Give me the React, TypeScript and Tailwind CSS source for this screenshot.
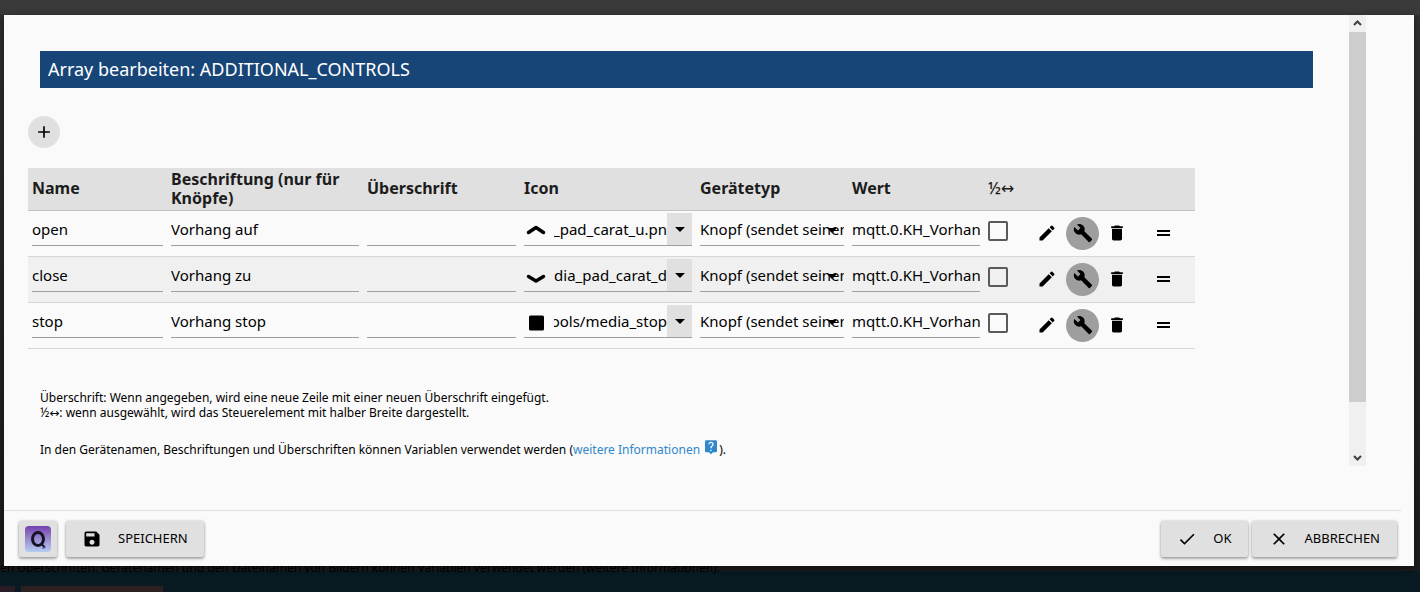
import React, { useState } from "react";
import {
  MdAdd,
  MdArrowDropDown,
  MdBuild,
  MdCheck,
  MdClose,
  MdDelete,
  MdEdit,
  MdLiveHelp,
  MdSave,
} from "react-icons/md";

interface Control {
  name: string;
  caption: string;
  heading: string;
  icon: "up" | "down" | "stop";
  iconPath: string;
  value: string;
  half: boolean;
}

const initialControls: Control[] = [
  { name: "open", caption: "Vorhang auf", heading: "", icon: "up", iconPath: "_pad_carat_u.pn", value: "mqtt.0.KH_Vorhang", half: false },
  { name: "close", caption: "Vorhang zu", heading: "", icon: "down", iconPath: "dia_pad_carat_d", value: "mqtt.0.KH_Vorhang", half: false },
  { name: "stop", caption: "Vorhang stop", heading: "", icon: "stop", iconPath: "ools/media_stop", value: "mqtt.0.KH_Vorhang", half: false },
];

const field = "block h-8 w-full border-b border-[#9e9e9e] bg-transparent text-[15px] text-black outline-none";
const raised =
  "flex h-9 items-center rounded-xs bg-[#e0e0e0] text-[13px] text-black shadow-[0_2px_3px_rgba(0,0,0,0.3),0_0_3px_rgba(0,0,0,0.2)]";

const MediaIcon = ({ type }: { type: Control["icon"] }) => (
  <svg viewBox="0 0 24 24" className="size-6 shrink-0" aria-hidden="true">
    {type === "up" && <path d="M4.500 15.500 12 10.500l7.500 5" fill="none" stroke="#000" strokeWidth="3.500" strokeLinecap="round" strokeLinejoin="round" />}
    {type === "down" && <path d="M4.500 13.500 12 18l7.500-4.500" fill="none" stroke="#000" strokeWidth="3.500" strokeLinecap="round" strokeLinejoin="round" />}
    {type === "stop" && <rect x="5" y="6.500" width="15" height="15" rx="1.500" fill="#000" />}
  </svg>
);

const DragIcon = () => (
  <svg viewBox="0 0 20 20" className="size-5" aria-hidden="true">
    <path d="M3 7h13v2H3zM3 11h13v2H3z" />
  </svg>
);

const Logo = () => (
  <svg viewBox="0 0 26 26" className="size-[26px]" aria-hidden="true">
    <defs>
      <linearGradient id="logoBg" x1="0" y1="0" x2="0" y2="1">
        <stop offset="0" stopColor="#7440ae" />
        <stop offset="0.500" stopColor="#9a8ad0" />
        <stop offset="1" stopColor="#b4cdf2" />
      </linearGradient>
    </defs>
    <rect width="26" height="26" rx="4" fill="url(#logoBg)" />
    <ellipse cx="13" cy="13" rx="5.500" ry="6.500" fill="none" stroke="#161424" strokeWidth="3" />
    <path d="M16 17.500l3.500 3.500" stroke="#161424" strokeWidth="2" />
    <path d="M17 22h3v-2" fill="none" stroke="#5a3a9a" strokeWidth="1" />
  </svg>
);

const HalfWidth = () => (
  <>
    ½<span className="font-['DejaVu_Sans',sans-serif] leading-none">↔</span>
  </>
);

const ControlRow = ({ control, onChange }: { control: Control; onChange: (c: Control) => void }) => (
  <tr className="h-[46px] border-b border-[#d6d6d6] align-top even:bg-[#f0f0f0]">
    <td className="px-1 pt-[3px]">
      <input aria-label="Name" className={field} value={control.name} onChange={(e) => onChange({ ...control, name: e.target.value })} />
    </td>
    <td className="px-1 pt-[3px]">
      <input aria-label="Beschriftung" className={field} value={control.caption} onChange={(e) => onChange({ ...control, caption: e.target.value })} />
    </td>
    <td className="px-1 pt-[3px]">
      <input aria-label="Überschrift" className={field} value={control.heading} onChange={(e) => onChange({ ...control, heading: e.target.value })} />
    </td>
    <td className="px-1 pt-[3px]">
      <div className="flex h-8 items-center border-b border-[#9e9e9e]">
        <MediaIcon type={control.icon} />
        <div className="ml-1.5 flex min-w-0 flex-1 justify-end overflow-hidden">
          <input
            aria-label="Icon"
            className="w-[140px] shrink-0 bg-transparent text-right text-[15px] text-black outline-none"
            value={control.iconPath}
            onChange={(e) => onChange({ ...control, iconPath: e.target.value })}
          />
        </div>
        <button aria-label="Icon wählen" className="flex h-8 w-[25px] shrink-0 items-center justify-center bg-[#e0e0e0]">
          <MdArrowDropDown className="size-6 shrink-0" />
        </button>
      </div>
    </td>
    <td className="px-1 pt-[3px]">
      <div className="relative">
        <select aria-label="Gerätetyp" className={field + " appearance-none"}>
          <option>Knopf (sendet seinen Wert)</option>
        </select>
        <MdArrowDropDown className="pointer-events-none absolute top-1 right-0 size-6" />
      </div>
    </td>
    <td className="px-1 pt-[3px]">
      <input aria-label="Wert" className={field} value={control.value} onChange={(e) => onChange({ ...control, value: e.target.value })} />
    </td>
    <td className="px-1 pt-2.5">
      <input
        type="checkbox"
        aria-label="Halbe Breite"
        className="block size-5 appearance-none rounded-xs border-2 border-[#5a5a5a] checked:bg-[#5a5a5a]"
        checked={control.half}
        onChange={(e) => onChange({ ...control, half: e.target.checked })}
      />
    </td>
    <td className="pt-1.5">
      <div className="flex items-center gap-[3px]">
        <button aria-label="Bearbeiten" className="flex size-[33px] items-center justify-center">
          <MdEdit className="size-5" />
        </button>
        <button aria-label="Einstellungen" className="flex size-[33px] items-center justify-center rounded-full bg-[#9e9e9e]">
          <MdBuild className="size-5" />
        </button>
        <button aria-label="Löschen" className="flex h-[33px] w-[30px] items-center justify-center">
          <MdDelete className="size-5" />
        </button>
        <button aria-label="Verschieben" className="ml-3 flex size-[33px] items-center justify-center">
          <DragIcon />
        </button>
      </div>
    </td>
  </tr>
);

// dimmed page that stays visible around the dialog
const Backdrop = () => (
  <div className="absolute inset-0 flex flex-col bg-[#262626]" aria-hidden="true">
    <div className="h-[15px] bg-[#3a3a3a]" />
    <div className="flex flex-1 flex-col justify-end overflow-hidden bg-gradient-to-b from-[#32302e] to-[#1c1c1c]" />
    <div className="flex h-[21px] flex-col justify-between bg-[#091a23]">
      <p className="-mt-2.5 text-xs leading-[14px] text-black">
        en Überschriften. Gerätenamen und den Dateinamen von Bildern können Variablen verwendet werden (weitere Informationen).
      </p>
      <div className="flex gap-1.5">
        <div className="h-1.5 w-[15px] bg-[#2a1c24]" />
        <div className="h-1.5 w-[142px] bg-[#2c2020]" />
      </div>
    </div>
  </div>
);

export default function App() {
  const [controls, setControls] = useState<Control[]>(initialControls);

  const update = (index: number, next: Control) =>
    setControls(controls.map((c, i) => (i === index ? next : c)));

  const add = () =>
    setControls([...controls, { name: "", caption: "", heading: "", icon: "stop", iconPath: "", value: "", half: false }]);

  return (
    <div className="relative flex h-screen flex-col pt-[15px] pr-1.5 pb-[26px] pl-1 font-['Noto_Sans','Open_Sans',sans-serif]">
      <Backdrop />
      <div role="dialog" aria-labelledby="title" className="relative flex min-h-0 flex-1 flex-col bg-[#fafafa] shadow-[0_2px_8px_rgba(0,0,0,0.5)]">
        <div className="mr-12 mb-11 flex min-h-0 flex-1">
          <main className="min-w-0 flex-1 overflow-hidden pt-9 pl-6">
            <h1 id="title" className="mr-9 ml-3 bg-[#174577] px-2 py-1.5 text-lg leading-[25px] text-white">
              Array bearbeiten: ADDITIONAL_CONTROLS
            </h1>
            <button aria-label="Hinzufügen" className="mt-7 flex size-8 items-center justify-center rounded-full bg-[#e0e0e0]" onClick={add}>
              <MdAdd className="size-5" />
            </button>
            <div className="mt-5 pr-[154px]">
              <table className="w-full table-fixed border-collapse">
                <colgroup>
                  <col className="w-[139px]" />
                  <col />
                  <col className="w-[157px]" />
                  <col className="w-[176px]" />
                  <col className="w-[152px]" />
                  <col className="w-[136px]" />
                  <col className="w-[46px]" />
                  <col className="w-[165px]" />
                </colgroup>
                <thead>
                  <tr className="h-[42px] border-b border-[#c4c4c4] bg-[#e0e0e0] text-left text-base leading-[19px] text-[#1c1c1c]">
                    <th className="px-1">Name</th>
                    <th className="px-1">Beschriftung (nur für Knöpfe)</th>
                    <th className="px-1">Überschrift</th>
                    <th className="px-1">Icon</th>
                    <th className="px-1">Gerätetyp</th>
                    <th className="px-1">Wert</th>
                    <th className="px-1 font-medium whitespace-nowrap">
                      <HalfWidth />
                    </th>
                    <th></th>
                  </tr>
                </thead>
                <tbody>
                  {controls.map((control, i) => (
                    <ControlRow key={i} control={control} onChange={(next) => update(i, next)} />
                  ))}
                </tbody>
              </table>
            </div>
            <div className="mt-[41px] ml-3 text-xs leading-[15px] text-black">
              <p>Überschrift: Wenn angegeben, wird eine neue Zeile mit einer neuen Überschrift eingefügt.</p>
              <p>
                <HalfWidth />: wenn ausgewählt, wird das Steuerelement mit halber Breite dargestellt.
              </p>
              <p className="mt-[19px]">
                In den Gerätenamen, Beschriftungen und Überschriften können Variablen verwendet werden (
                <a href="#info" className="text-[#2f87cc]">
                  weitere Informationen <MdLiveHelp className="mb-2 inline size-4" />
                </a>
                ).
              </p>
            </div>
          </main>
          <div className="flex w-[17px] flex-col items-center bg-[#f0f0f0]" aria-hidden="true">
            <svg viewBox="0 0 17 17" className="size-[17px]">
              <path d="M5 10l3.500-3.500L12 10" fill="none" stroke="#404040" strokeWidth="2" />
            </svg>
            <div className="w-full flex-[370] bg-[#cdcdcd]" />
            <div className="flex-[47]" />
            <svg viewBox="0 0 17 17" className="size-[17px]">
              <path d="M5 7l3.500 3.500L12 7" fill="none" stroke="#404040" strokeWidth="2" />
            </svg>
          </div>
        </div>
        <footer className="mr-[13px] flex h-14 items-start border-t border-[#e0e0e0] pt-2.5 pr-1 pl-[15px]">
          <button aria-label="Übersetzer" className={raised + " w-[38px] justify-center"}>
            <Logo />
          </button>
          <button className={raised + " ml-[9px] gap-4 px-4"}>
            <MdSave className="size-5" />
            SPEICHERN
          </button>
          <button className={raised + " ml-auto gap-4 px-4"}>
            <MdCheck className="size-5" />
            OK
          </button>
          <button className={raised + " ml-1 gap-4 px-[17px]"}>
            <MdClose className="size-5" />
            ABBRECHEN
          </button>
        </footer>
      </div>
    </div>
  );
}
